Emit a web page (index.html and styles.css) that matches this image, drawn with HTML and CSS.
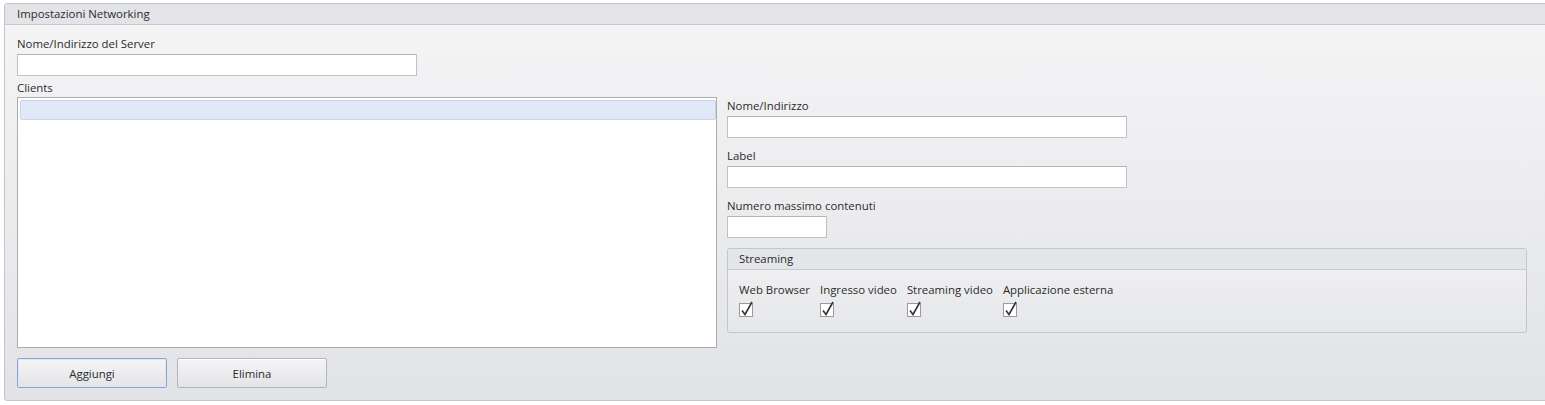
FILE: index.html
```html
<!DOCTYPE html>
<html lang="it">
<head>
<meta charset="utf-8">
<title>Impostazioni Networking</title>
<link rel="stylesheet" href="styles.css">
</head>
<body>
<section class="panel">
  <header class="panel-head">Impostazioni Networking</header>
  <div class="panel-body">
    <label class="lbl">Nome/Indirizzo del Server</label>
    <input class="field field-server" type="text">
    <div class="split">
      <div class="left">
        <label class="lbl lbl-tight">Clients</label>
        <div class="listbox">
          <div class="list-item"></div>
        </div>
        <div class="buttons">
          <button class="btn btn-default">Aggiungi</button>
          <button class="btn">Elimina</button>
        </div>
      </div>
      <div class="right">
        <label class="lbl">Nome/Indirizzo</label>
        <input class="field field-wide" type="text">
        <label class="lbl gap">Label</label>
        <input class="field field-wide" type="text">
        <label class="lbl gap">Numero massimo contenuti</label>
        <input class="field field-small" type="text">
        <div class="group">
          <div class="group-head">Streaming</div>
          <div class="group-body">
            <div class="check-col">
              <span class="check-lbl">Web Browser</span>
              <span class="check"><svg viewBox="0 0 16 16" width="16" height="16"><rect x="0.5" y="2.5" width="13" height="13" fill="#fff" stroke="#9a9a9a"/><path d="M3 9.5 L6 13.5 L13 1" fill="none" stroke="#333" stroke-width="1.6"/></svg></span>
            </div>
            <div class="check-col">
              <span class="check-lbl">Ingresso video</span>
              <span class="check"><svg viewBox="0 0 16 16" width="16" height="16"><rect x="0.5" y="2.5" width="13" height="13" fill="#fff" stroke="#9a9a9a"/><path d="M3 9.5 L6 13.5 L13 1" fill="none" stroke="#333" stroke-width="1.6"/></svg></span>
            </div>
            <div class="check-col">
              <span class="check-lbl">Streaming video</span>
              <span class="check"><svg viewBox="0 0 16 16" width="16" height="16"><rect x="0.5" y="2.5" width="13" height="13" fill="#fff" stroke="#9a9a9a"/><path d="M3 9.5 L6 13.5 L13 1" fill="none" stroke="#333" stroke-width="1.6"/></svg></span>
            </div>
            <div class="check-col">
              <span class="check-lbl">Applicazione esterna</span>
              <span class="check"><svg viewBox="0 0 16 16" width="16" height="16"><rect x="0.5" y="2.5" width="13" height="13" fill="#fff" stroke="#9a9a9a"/><path d="M3 9.5 L6 13.5 L13 1" fill="none" stroke="#333" stroke-width="1.6"/></svg></span>
            </div>
          </div>
        </div>
      </div>
    </div>
  </div>
</section>
</body>
</html>
```

FILE: styles.css
```css
html, body {
  margin: 0;
  padding: 0;
  background: #ffffff;
  overflow: hidden;
}
body {
  width: 1545px;
  height: 405px;
  padding: 3px 0 0 4px;
  box-sizing: border-box;
  font-family: "Open Sans", "Noto Sans", sans-serif;
  font-size: 11.4px;
  color: #2b2b2b;
}
.panel {
  width: 1560px;
  height: 398px;
  box-sizing: border-box;
  border: 1px solid #c3c4c7;
  border-radius: 3px;
  background: linear-gradient(#f5f5f6, #e2e3e7);
  display: flex;
  flex-direction: column;
}
.panel-head {
  height: 20px;
  line-height: 20px;
  padding-left: 12px;
  background: #e3e4e8;
  border-bottom: 1px solid #c8c9cd;
  border-radius: 3px 3px 0 0;
}
.panel-body {
  padding: 11px 0 0 12px;
  display: flex;
  flex-direction: column;
  align-items: flex-start;
}
.lbl {
  display: block;
  height: 16px;
  line-height: 16px;
  margin-bottom: 2px;
  white-space: nowrap;
}
.lbl-tight {
  margin-bottom: 1px;
}
.lbl.gap {
  margin-top: 10px;
}
.field {
  display: block;
  box-sizing: border-box;
  height: 22px;
  margin: 0;
  padding: 0 4px;
  border: 1px solid #bfc1c6;
  border-top-color: #b3b5ba;
  background: #fff;
  border-radius: 1px;
  font: inherit;
}
.field-server { width: 400px; }
.field-wide { width: 400px; }
.field-small { width: 100px; }
.split {
  display: flex;
  margin-top: 4px;
}
.left {
  width: 700px;
  display: flex;
  flex-direction: column;
}
.listbox {
  box-sizing: border-box;
  width: 700px;
  height: 251px;
  border: 1px solid #a9abb1;
  background: #fff;
  padding: 2px 0 0 2px;
}
.list-item {
  box-sizing: border-box;
  width: 696px;
  height: 20px;
  background: #e1e9f9;
  border: 1px solid #c6d4ee;
  border-radius: 2px;
}
.buttons {
  display: flex;
  gap: 10px;
  margin-top: 10px;
}
.btn {
  box-sizing: border-box;
  width: 150px;
  height: 30px;
  margin: 0;
  border: 1px solid #b3b5ba;
  border-radius: 2px;
  background: linear-gradient(#f5f5f6, #e3e4e6);
  font: inherit;
  color: #2b2b2b;
  box-shadow: inset 0 1px 0 #ffffff;
}
.btn-default {
  border-color: #8ea4d4;
  box-shadow: inset 0 0 0 1px #dfe6f6;
}
.right {
  margin-left: 10px;
  padding-top: 18px;
  display: flex;
  flex-direction: column;
}
.group {
  margin-top: 10px;
  box-sizing: border-box;
  width: 800px;
  height: 85px;
  border: 1px solid #c4c5c9;
  border-radius: 3px;
  background: linear-gradient(#f1f1f3, #e6e7ea);
}
.group-head {
  height: 20px;
  line-height: 20px;
  padding-left: 11px;
  background: #e4e5e9;
  border-bottom: 1px solid #cacbcf;
  border-radius: 3px 3px 0 0;
}
.group-body {
  display: flex;
  gap: 10px;
  padding: 12px 0 0 11px;
}
.check-col {
  display: flex;
  flex-direction: column;
  align-items: flex-start;
}
.check-lbl {
  height: 16px;
  line-height: 16px;
  white-space: nowrap;
}
.check {
  display: block;
  height: 16px;
  margin-top: 3px;
}
.check svg { display: block; }
```
